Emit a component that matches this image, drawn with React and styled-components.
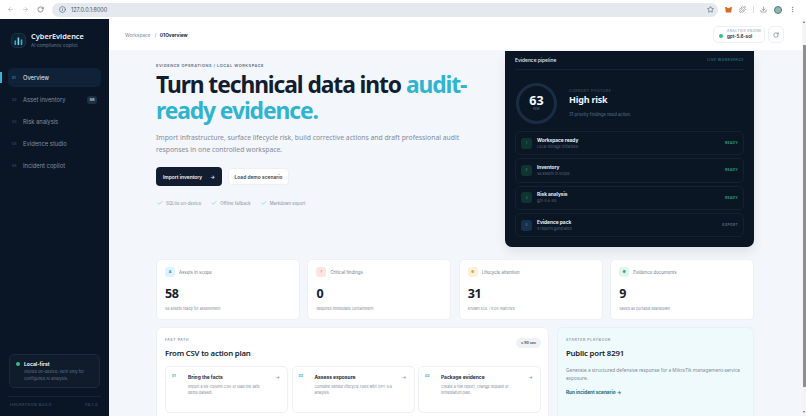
import React from "react";
import styled, { createGlobalStyle } from "styled-components";
import { ArrowLeft, ArrowRight, RotateCw, Star, Info, Puzzle, Download, MoreVertical, Check } from "lucide-react";

const GlobalStyle = createGlobalStyle`
  html, body, #root {
    margin: 0;
    height: 100%;
    overflow: hidden;
  }
  * { box-sizing: border-box; }
  body {
    font-family: Inter, "Noto Sans", sans-serif;
    background: #fff;
  }
`;

const Page = styled.div`
  width: 806px;
  height: 416px;
  display: flex;
  flex-direction: column;
  overflow: hidden;
`;

const BrowserBar = styled.div`
  height: 19px;
  flex: none;
  display: flex;
  align-items: center;
  background: #fff;
  color: #6b7280;
  padding: 0 8px 0 7px;
`;

const NavIcons = styled.div`
  display: flex;
  gap: 8px;
  width: 45px;
  align-items: center;
`;

const Omnibox = styled.div`
  width: 666px;
  height: 14px;
  background: #e4e9f0;
  border-radius: 7px;
  display: flex;
  align-items: center;
  gap: 5px;
  padding: 0 4px 0 7px;
  font-size: 5.5px;
  color: #4b5563;
`;

const OmniText = styled.span`
  flex: 1;
`;

const ExtIcons = styled.div`
  display: flex;
  align-items: center;
  margin-left: 7px;
  width: 71px;
  justify-content: space-between;
`;

const FoxMark = styled.div`
  width: 7px;
  height: 6px;
  background: #d9691e;
  clip-path: polygon(0 0, 50% 30%, 100% 0, 88% 100%, 12% 100%);
`;

const ExtSep = styled.div`
  width: 1px;
  height: 7px;
  background: #d9dde3;
`;

const Avatar = styled.div`
  width: 8px;
  height: 8px;
  border-radius: 50%;
  background: #8fb5ac;
  border: 1px solid #4f7f8c;
`;

const Body = styled.div`
  flex: 1;
  min-height: 0;
  display: flex;
`;

const Sidebar = styled.aside`
  width: 109px;
  flex: none;
  background: #0a1626;
  display: flex;
  flex-direction: column;
  padding: 13px 8px 0;
  color: #fff;
`;

const Brand = styled.div`
  display: flex;
  align-items: center;
  gap: 5px;
  padding: 0 3px;
  margin-bottom: 19px;
`;

const BrandMark = styled.div`
  width: 15px;
  height: 15px;
  border-radius: 5px;
  border: 1px solid #1d3345;
  background: #0e2230;
  display: flex;
  align-items: center;
  justify-content: center;
`;

const BrandName = styled.div`
  font: 600 7.4px/9px "Noto Sans", sans-serif;
  color: #f1f5f9;
`;

const BrandSub = styled.div`
  font-size: 4.6px;
  line-height: 7px;
  color: #64748b;
  margin-top: 1px;
`;

const NavList = styled.nav`
  display: flex;
  flex-direction: column;
  gap: 3px;
  position: relative;
`;

const NavItem = styled.div`
  height: 19px;
  border-radius: 5px;
  display: flex;
  align-items: center;
  padding: 0 4px 0 4px;
  font-size: 5.8px;
  color: ${(p) => (p.$active ? "#e6edf5" : "#7f8fa3")};
  background: ${(p) => (p.$active ? "#0f2238" : "transparent")};
  position: relative;
`;

const NavMarker = styled.span`
  position: absolute;
  left: -8px;
  top: 4px;
  width: 1.5px;
  height: 11px;
  background: #2fb8d3;
`;

const NavNum = styled.span`
  font-size: 3.6px;
  width: 11px;
  color: ${(p) => (p.$active ? "#2fb8d3" : "#46566a")};
`;

const NavLabel = styled.span`
  flex: 1;
`;

const NavBadge = styled.span`
  font-size: 4px;
  font-weight: 600;
  color: #c3d0dd;
  background: #1d3144;
  border-radius: 3px;
  padding: 1.5px 2.5px;
`;

const LocalCard = styled.div`
  margin-top: auto;
  margin-left: 1px;
  margin-right: 1px;
  height: 34px;
  border: 1px solid #1a2a3b;
  border-radius: 5px;
  background: #101c2c;
  padding: 5px 5px 0 6px;
  display: flex;
  gap: 4px;
`;

const GreenDot = styled.span`
  width: 4px;
  height: 4px;
  margin-top: 2px;
  flex: none;
  border-radius: 50%;
  background: #2fc08a;
`;

const LocalTitle = styled.div`
  font-size: 5px;
  font-weight: 700;
  line-height: 8px;
  color: #f1f5f9;
`;

const LocalText = styled.div`
  font-size: 4.1px;
  line-height: 7px;
  color: #64748b;
  white-space: nowrap;
`;

const BuildRow = styled.div`
  margin-top: 8px;
  height: 20px;
  border-top: 1px solid #162436;
  display: flex;
  justify-content: space-between;
  align-items: center;
  padding: 0 3px 3px 2px;
  font-size: 3.6px;
  letter-spacing: 0.5px;
  color: #4f5f72;
`;

const Main = styled.main`
  flex: 1;
  min-width: 0;
  display: flex;
  flex-direction: column;
  background: #f3f6fa;
`;

const TopBar = styled.header`
  height: 31px;
  flex: none;
  background: #fff;
  display: flex;
  align-items: center;
  padding: 0 18px 0 16px;
  font-size: 4.8px;
  color: #7c8898;
`;

const Crumb = styled.span`
  margin-left: 3.5px;
  font-weight: 700;
  color: #1f2937;
`;

const CrumbSep = styled.span`
  margin-left: 4px;
`;

const EngineChip = styled.div`
  margin-left: auto;
  width: 52px;
  height: 17px;
  border: 1px solid #eceff3;
  border-radius: 5px;
  display: flex;
  align-items: center;
  gap: 4px;
  padding-left: 5px;
`;

const EngineLabel = styled.div`
  font-size: 3.4px;
  letter-spacing: 0.3px;
  line-height: 5px;
  color: #8a96a5;
`;

const EngineValue = styled.div`
  font-size: 4.6px;
  line-height: 6px;
  font-weight: 600;
  color: #1f2937;
`;

const RefreshBox = styled.div`
  margin-left: 3px;
  width: 16px;
  height: 17px;
  border: 1px solid #eceff3;
  border-radius: 5px;
  display: flex;
  align-items: center;
  justify-content: center;
  color: #4b5563;
`;

const Content = styled.div`
  padding: 0 48px 0 47px;
  display: flex;
  flex-direction: column;
`;

const Hero = styled.section`
  display: flex;
  justify-content: space-between;
  height: 197px;
  padding-top: 1px;
`;

const HeroCopy = styled.div`
  width: 325px;
  padding-top: 12px;
`;

const Eyebrow = styled.div`
  font-size: 3.9px;
  font-weight: 600;
  letter-spacing: 0.55px;
  line-height: 6px;
  color: #5d6b7c;
  white-space: nowrap;
`;

const Headline = styled.h1`
  margin: 3px 0 0;
  font: 700 22.8px/26px "Noto Sans", sans-serif;
  letter-spacing: -1.08px;
  color: #121d30;
  white-space: nowrap;
`;

const Accent = styled.span`
  color: #2fb4d0;
`;

const Lead = styled.p`
  margin: 8px 0 0;
  font: 400 6.8px/12px "Noto Sans", sans-serif;
  color: #7f8b9a;
  white-space: nowrap;
`;

const Actions = styled.div`
  display: flex;
  gap: 6px;
  margin-top: 11px;
`;

const PrimaryBtn = styled.div`
  width: 66px;
  height: 19px;
  background: #121d30;
  border-radius: 4px;
  color: #f1f5f9;
  font-size: 4.9px;
  font-weight: 600;
  display: flex;
  align-items: center;
  justify-content: space-between;
  padding: 0 7px;
`;

const SecondaryBtn = styled.div`
  width: 61px;
  height: 17px;
  margin-top: 1px;
  background: #fff;
  border: 1px solid #eceff3;
  border-radius: 4px;
  color: #374151;
  font-size: 4.9px;
  font-weight: 600;
  display: flex;
  align-items: center;
  justify-content: center;
`;

const Checks = styled.div`
  display: flex;
  gap: 10px;
  margin-top: 14px;
  padding-left: 1px;
`;

const CheckItem = styled.div`
  display: flex;
  align-items: center;
  gap: 3px;
  font-size: 4.3px;
  color: #8490a0;
  white-space: nowrap;
`;

const Pipeline = styled.div`
  width: 249px;
  height: 196px;
  flex: none;
  background: #0a1624;
  border-radius: 0 0 7px 7px;
  box-shadow: 0 6px 12px rgba(15, 23, 42, 0.08);
  padding: 0 10px;
  display: flex;
  flex-direction: column;
`;

const PipelineHead = styled.div`
  height: 19px;
  display: flex;
  align-items: center;
  justify-content: space-between;
  border-bottom: 1px solid #142233;
  padding-bottom: 1px;
  font-size: 4.9px;
  font-weight: 500;
  color: #e2e8f0;
`;

const LiveTag = styled.span`
  font-size: 3.5px;
  letter-spacing: 0.45px;
  color: #2a7f97;
`;

const Posture = styled.div`
  display: flex;
  align-items: center;
  gap: 12px;
  height: 56px;
  padding: 10px 1px 0 1px;
`;

const Gauge = styled.div`
  width: 41px;
  height: 41px;
  flex: none;
  border-radius: 50%;
  border: 3px solid #1a2d44;
  display: flex;
  flex-direction: column;
  align-items: center;
  justify-content: center;
`;

const GaugeValue = styled.div`
  font: 700 12.5px/13px "Noto Sans", sans-serif;
  color: #f8fafc;
`;

const GaugeLabel = styled.div`
  font-size: 3px;
  line-height: 5px;
  color: #64748b;
`;

const PostureLabel = styled.div`
  font-size: 3.6px;
  letter-spacing: 0.5px;
  line-height: 6px;
  color: #4f5f72;
`;

const PostureTitle = styled.div`
  font: 700 9px/12px "Noto Sans", sans-serif;
  letter-spacing: -0.2px;
  color: #f1f5f9;
`;

const PostureNote = styled.div`
  font-size: 4.2px;
  line-height: 6px;
  color: #64748b;
  margin-top: 6px;
`;

const Steps = styled.div`
  display: flex;
  flex-direction: column;
  gap: 3px;
  margin-top: 5px;
`;

const Step = styled.div`
  height: 24.3px;
  border: 1px solid #14212f;
  border-radius: 5px;
  display: flex;
  align-items: center;
  padding: 0 5px 0 5px;
`;

const StepNum = styled.div`
  width: 11px;
  height: 11px;
  border-radius: 3px;
  margin-right: 5px;
  font-size: 3.6px;
  display: flex;
  align-items: center;
  justify-content: center;
  color: ${(p) => (p.$done ? "#2c9c74" : "#5f7fa6")};
  background: ${(p) => (p.$done ? "#0f3431" : "#17304c")};
`;

const StepText = styled.div`
  flex: 1;
`;

const StepTitle = styled.div`
  font-size: 4.8px;
  font-weight: 700;
  line-height: 7px;
  color: #e8eef5;
`;

const StepSub = styled.div`
  font-size: 3.7px;
  line-height: 6px;
  color: #55657a;
`;

const StepState = styled.span`
  font-size: 3.4px;
  font-weight: 700;
  letter-spacing: 0.3px;
  color: ${(p) => (p.$done ? "#2c9c74" : "#55657a")};
`;

const Stats = styled.section`
  display: grid;
  grid-template-columns: repeat(4, 1fr);
  gap: 7.5px;
  margin-top: 12px;
`;

const StatCard = styled.div`
  height: 61px;
  background: #fff;
  border: 1px solid #edf0f4;
  border-radius: 5px;
  padding: 7px 8px 0;
`;

const StatHead = styled.div`
  display: flex;
  align-items: center;
  gap: 4px;
  font-size: 4.4px;
  color: #6b7788;
`;

const StatIcon = styled.div`
  width: 10px;
  height: 10px;
  border-radius: 3px;
  font-size: 3.6px;
  font-weight: 700;
  display: flex;
  align-items: center;
  justify-content: center;
  background: ${(p) => p.$bg};
  color: ${(p) => p.$fg};
`;

const StatValue = styled.div`
  font: 700 12.5px/14px "Noto Sans", sans-serif;
  letter-spacing: -0.5px;
  color: #121d30;
  margin-top: 10px;
`;

const StatNote = styled.div`
  font-size: 3.7px;
  line-height: 6px;
  color: #7c8898;
  margin-top: 5px;
`;

const Lower = styled.section`
  display: grid;
  grid-template-columns: 393px 197px;
  gap: 8px;
  margin-top: 7px;
`;

const PathCard = styled.div`
  height: 100px;
  background: #fff;
  border: 1px solid #edf0f4;
  border-radius: 6px;
  padding: 9px 1px 0 8px;
`;

const PathHead = styled.div`
  display: flex;
  justify-content: space-between;
  align-items: flex-start;
  padding-right: 6px;
`;

const SectionLabel = styled.div`
  font-size: 3.6px;
  letter-spacing: 0.55px;
  line-height: 6px;
  color: #5d6b7c;
`;

const SectionTitle = styled.div`
  font: 600 7.8px/12px "Noto Sans", sans-serif;
  letter-spacing: -0.2px;
  color: #121d30;
  margin-top: 4px;
`;

const TimeChip = styled.span`
  font-size: 3.6px;
  font-weight: 600;
  color: #4b5563;
  background: #eef1f5;
  padding: 3px 5px;
  border-radius: 5px;
  margin-top: 1px;
`;

const PathSteps = styled.div`
  display: grid;
  grid-template-columns: repeat(3, 123px);
  gap: 3.5px;
  margin-top: 7px;
`;

const PathStep = styled.div`
  height: 47px;
  border: 1px solid #edf0f4;
  border-radius: 5px;
  padding: 7px 7px 0 6px;
  display: flex;
`;

const PathNum = styled.div`
  width: 16px;
  flex: none;
  font-size: 3.4px;
  font-weight: 700;
  color: #2fb4d0;
`;

const PathBody = styled.div`
  flex: 1;
  padding-right: 5px;
`;

const PathTitle = styled.div`
  font-size: 4.9px;
  font-weight: 700;
  line-height: 7px;
  color: #1f2937;
`;

const PathText = styled.div`
  font-size: 3.7px;
  line-height: 6px;
  color: #7c8898;
  margin-top: 3px;
`;

const PathArrow = styled.div`
  font-size: 5px;
  color: #8a96a5;
  line-height: 7px;
`;

const PlaybookCard = styled.div`
  height: 100px;
  background: #effafc;
  border: 1px solid #e2f4f8;
  border-radius: 6px;
  padding: 9px 8px 0;
`;

const PlaybookText = styled.div`
  font: 400 4.75px/8.2px "Noto Sans", sans-serif;
  color: #7c8898;
  margin-top: 7px;
`;

const PlaybookLink = styled.div`
  font-size: 4.7px;
  font-weight: 700;
  color: #14677c;
  margin-top: 7px;
`;

const Scrollbar = styled.div`
  width: 4px;
  flex: none;
  background: #f4f4f4;
  display: flex;
  flex-direction: column;
  align-items: center;
`;

const ScrollArrow = styled.div`
  width: 0;
  height: 0;
  border-left: 1.5px solid transparent;
  border-right: 1.5px solid transparent;
  border-bottom: ${(p) => (p.$down ? "0" : "2px solid #6b6b6b")};
  border-top: ${(p) => (p.$down ? "2px solid #6b6b6b" : "0")};
  margin-top: ${(p) => (p.$down ? "24px" : "2px")};
`;

const ScrollThumb = styled.div`
  width: 3px;
  height: 342px;
  margin-top: 22px;
  background: #8f8f8f;
`;

const navItems = [
  { num: "01", label: "Overview", active: true },
  { num: "02", label: "Asset inventory", badge: "58" },
  { num: "03", label: "Risk analysis" },
  { num: "04", label: "Evidence studio" },
  { num: "05", label: "Incident copilot" },
];

const pipelineSteps = [
  { num: 1, title: "Workspace ready", sub: "Local storage initialized", state: "READY", done: true },
  { num: 2, title: "Inventory", sub: "58 assets in scope", state: "READY", done: true },
  { num: 3, title: "Risk analysis", sub: "gpt-5.6-sol", state: "READY", done: true },
  { num: 4, title: "Evidence pack", sub: "9 reports generated", state: "EXPORT", done: false },
];

const stats = [
  { icon: "A", bg: "#ddf5fb", fg: "#1f8aa6", label: "Assets in scope", value: "58", note: "58 assets ready for assessment" },
  { icon: "!", bg: "#fde4e4", fg: "#e06a6a", label: "Critical findings", value: "0", note: "Requires immediate containment" },
  { icon: "\u25CF", bg: "#fdf0d9", fg: "#e0a64a", label: "Lifecycle attention", value: "31", note: "Known EOL / EOS matches" },
  { icon: "\u25CF", bg: "#dff7ec", fg: "#3aa57c", label: "Evidence documents", value: "9", note: "Saved as portable Markdown" },
];

const pathSteps = [
  { num: "01", title: "Bring the facts", text: "Import a six-column CSV or load the safe demo dataset." },
  { num: "02", title: "Assess exposure", text: "Combine vendor lifecycle rules with GPT-5.6 analysis." },
  { num: "03", title: "Package evidence", text: "Create a risk report, change request or remediation plan." },
];

const App = () => {
  return (
    <Page>
      <GlobalStyle />
      <BrowserBar>
        <NavIcons>
          <ArrowLeft size={7} color="#a3acb8" />
          <ArrowRight size={7} color="#a3acb8" />
          <RotateCw size={7} color="#4b5563" />
        </NavIcons>
        <Omnibox>
          <Info size={7} />
          <OmniText>127.0.0.1:8000</OmniText>
          <Star size={7} />
        </Omnibox>
        <ExtIcons>
          <FoxMark />
          <Puzzle size={7} />
          <ExtSep />
          <Download size={7} />
          <Avatar />
          <MoreVertical size={7} />
        </ExtIcons>
      </BrowserBar>
      <Body>
        <Sidebar>
          <Brand>
            <BrandMark>
              <svg width="9" height="8" viewBox="0 0 9 8">
                <rect x="0.5" y="3.5" width="1.6" height="4.5" fill="#2fb4d0" />
                <rect x="3.6" y="0.5" width="1.6" height="7.5" fill="#7fd6e6" />
                <rect x="6.7" y="2.5" width="1.6" height="5.5" fill="#2fb4d0" />
              </svg>
            </BrandMark>
            <div>
              <BrandName>CyberEvidence</BrandName>
              <BrandSub>AI compliance copilot</BrandSub>
            </div>
          </Brand>
          <NavList>
            {navItems.map((item) => (
              <NavItem key={item.num} $active={item.active}>
                {item.active && <NavMarker />}
                <NavNum $active={item.active}>{item.num}</NavNum>
                <NavLabel>{item.label}</NavLabel>
                {item.badge && <NavBadge>{item.badge}</NavBadge>}
              </NavItem>
            ))}
          </NavList>
          <LocalCard>
            <GreenDot />
            <div>
              <LocalTitle>Local-first</LocalTitle>
              <LocalText>Stored on-device; sent only for</LocalText>
              <LocalText>configured AI analysis.</LocalText>
            </div>
          </LocalCard>
          <BuildRow>
            <span>HACKATHON BUILD</span>
            <span>V8.1.0</span>
          </BuildRow>
        </Sidebar>
        <Main>
          <TopBar>
            <span>Workspace</span>
            <CrumbSep>/</CrumbSep>
            <Crumb>01Overview</Crumb>
            <EngineChip>
              <GreenDot />
              <div>
                <EngineLabel>ANALYSIS ENGINE</EngineLabel>
                <EngineValue>gpt-5.6-sol</EngineValue>
              </div>
            </EngineChip>
            <RefreshBox>
              <RotateCw size={6} />
            </RefreshBox>
          </TopBar>
          <Content>
            <Hero>
              <HeroCopy>
                <Eyebrow>EVIDENCE OPERATIONS / LOCAL WORKSPACE</Eyebrow>
                <Headline>
                  Turn technical data into <Accent>audit-</Accent>
                  <br />
                  <Accent>ready evidence.</Accent>
                </Headline>
                <Lead>
                  Import infrastructure, surface lifecycle risk, build corrective actions and draft professional audit
                  <br />
                  responses in one controlled workspace.
                </Lead>
                <Actions>
                  <PrimaryBtn>
                    <span>Import inventory</span>
                    <span>→</span>
                  </PrimaryBtn>
                  <SecondaryBtn>Load demo scenario</SecondaryBtn>
                </Actions>
                <Checks>
                  {["SQLite on-device", "Offline fallback", "Markdown export"].map((c) => (
                    <CheckItem key={c}>
                      <Check size={6} color="#58c49a" />
                      {c}
                    </CheckItem>
                  ))}
                </Checks>
              </HeroCopy>
              <Pipeline>
                <PipelineHead>
                  <span>Evidence pipeline</span>
                  <LiveTag>LIVE WORKSPACE</LiveTag>
                </PipelineHead>
                <Posture>
                  <Gauge>
                    <GaugeValue>63</GaugeValue>
                    <GaugeLabel>RISK</GaugeLabel>
                  </Gauge>
                  <div>
                    <PostureLabel>CURRENT POSTURE</PostureLabel>
                    <PostureTitle>High risk</PostureTitle>
                    <PostureNote>31 priority findings need action.</PostureNote>
                  </div>
                </Posture>
                <Steps>
                  {pipelineSteps.map((s) => (
                    <Step key={s.num}>
                      <StepNum $done={s.done}>{s.num}</StepNum>
                      <StepText>
                        <StepTitle>{s.title}</StepTitle>
                        <StepSub>{s.sub}</StepSub>
                      </StepText>
                      <StepState $done={s.done}>{s.state}</StepState>
                    </Step>
                  ))}
                </Steps>
              </Pipeline>
            </Hero>
            <Stats>
              {stats.map((s) => (
                <StatCard key={s.label}>
                  <StatHead>
                    <StatIcon $bg={s.bg} $fg={s.fg}>{s.icon}</StatIcon>
                    {s.label}
                  </StatHead>
                  <StatValue>{s.value}</StatValue>
                  <StatNote>{s.note}</StatNote>
                </StatCard>
              ))}
            </Stats>
            <Lower>
              <PathCard>
                <PathHead>
                  <div>
                    <SectionLabel>FAST PATH</SectionLabel>
                    <SectionTitle>From CSV to action plan</SectionTitle>
                  </div>
                  <TimeChip>≈ 90 sec</TimeChip>
                </PathHead>
                <PathSteps>
                  {pathSteps.map((s) => (
                    <PathStep key={s.num}>
                      <PathNum>{s.num}</PathNum>
                      <PathBody>
                        <PathTitle>{s.title}</PathTitle>
                        <PathText>{s.text}</PathText>
                      </PathBody>
                      <PathArrow>→</PathArrow>
                    </PathStep>
                  ))}
                </PathSteps>
              </PathCard>
              <PlaybookCard>
                <SectionLabel>STARTER PLAYBOOK</SectionLabel>
                <SectionTitle>Public port 8291</SectionTitle>
                <PlaybookText>
                  Generate a structured defensive response for a MikroTik management-service exposure.
                </PlaybookText>
                <PlaybookLink>Run incident scenario →</PlaybookLink>
              </PlaybookCard>
            </Lower>
          </Content>
        </Main>
        <Scrollbar>
          <ScrollArrow />
          <ScrollThumb />
          <ScrollArrow $down />
        </Scrollbar>
      </Body>
    </Page>
  );
};

export default App;
